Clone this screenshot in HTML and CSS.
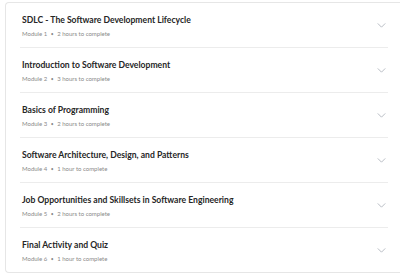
FILE: index.html
```html
<!DOCTYPE html>
<html>
<head>
<meta charset="utf-8">
<link rel="stylesheet" href="styles.css">
</head>
<body>
<div class="card">
  <div class="row">
    <div class="info">
      <div class="title">SDLC - The Software Development Lifecycle</div>
      <div class="meta">Module 1 <span class="dot">•</span> 2 hours to complete</div>
    </div>
    <svg class="chev" viewBox="0 0 10 6"><path d="M0.5 0.5 L5 5 L9.5 0.5"/></svg>
  </div>
  <div class="row">
    <div class="info">
      <div class="title">Introduction to Software Development</div>
      <div class="meta">Module 2 <span class="dot">•</span> 3 hours to complete</div>
    </div>
    <svg class="chev" viewBox="0 0 10 6"><path d="M0.5 0.5 L5 5 L9.5 0.5"/></svg>
  </div>
  <div class="row">
    <div class="info">
      <div class="title">Basics of Programming</div>
      <div class="meta">Module 3 <span class="dot">•</span> 2 hours to complete</div>
    </div>
    <svg class="chev" viewBox="0 0 10 6"><path d="M0.5 0.5 L5 5 L9.5 0.5"/></svg>
  </div>
  <div class="row">
    <div class="info">
      <div class="title">Software Architecture, Design, and Patterns</div>
      <div class="meta">Module 4 <span class="dot">•</span> 1 hour to complete</div>
    </div>
    <svg class="chev" viewBox="0 0 10 6"><path d="M0.5 0.5 L5 5 L9.5 0.5"/></svg>
  </div>
  <div class="row">
    <div class="info">
      <div class="title">Job Opportunities and Skillsets in Software Engineering</div>
      <div class="meta">Module 5 <span class="dot">•</span> 2 hours to complete</div>
    </div>
    <svg class="chev" viewBox="0 0 10 6"><path d="M0.5 0.5 L5 5 L9.5 0.5"/></svg>
  </div>
  <div class="row">
    <div class="info">
      <div class="title">Final Activity and Quiz</div>
      <div class="meta">Module 6 <span class="dot">•</span> 1 hour to complete</div>
    </div>
    <svg class="chev" viewBox="0 0 10 6"><path d="M0.5 0.5 L5 5 L9.5 0.5"/></svg>
  </div>
</div>
</body>
</html>
```
FILE: styles.css
```css
html, body {
  margin: 0;
  padding: 0;
  background: #ffffff;
  overflow: hidden;
}
body {
  padding: 2px 0 0 5px;
  font-family: "Lato", "Open Sans", sans-serif;
}
.card {
  box-sizing: border-box;
  width: 395px;
  border: 1px solid #e6e6e6;
  border-right: none;
  border-radius: 4px 0 0 4px;
  padding: 0 12px 0 14px;
}
.row {
  height: 44px;
  display: flex;
  align-items: center;
  border-bottom: 1px solid #ececec;
  padding-left: 2px;
}
.row:last-child {
  border-bottom: none;
}
.info {
  flex: 1;
  padding-top: 1px;
}
.title {
  font-size: 8.6px;
  font-weight: 700;
  color: #262626;
  line-height: 12px;
}
.meta {
  font-size: 6px;
  color: #8a8a8a;
  line-height: 8px;
  margin-top: 4px;
}
.dot {
  margin: 0 2px;
  font-size: 5px;
}
.chev {
  width: 9px;
  height: 5px;
  margin-right: 2px;
  fill: none;
  stroke: #a9b0b8;
  stroke-width: 1;
}
```
